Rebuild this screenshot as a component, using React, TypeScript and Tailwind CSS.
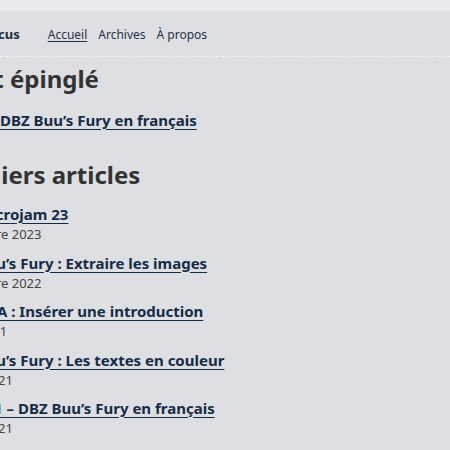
import React from "react";

const posts = [
  { title: "Défi Microjam 23", date: "14 octobre 2023" },
  { title: "DBZ Buu’s Fury : Extraire les images", date: "12 octobre 2022" },
  { title: "SDK GBA : Insérer une introduction", date: "mars 2021" },
  { title: "DBZ Buu’s Fury : Les textes en couleur", date: "1 avril 2021" },
  { title: "Hack #1 – DBZ Buu’s Fury en français", date: "3 avril 2021" },
];

const App: React.FC = () => {
  return (
    <div className="min-h-screen overflow-hidden bg-[#dedfe2] font-['Noto_Sans',sans-serif]">
      <div className="h-[11px] bg-[#e8e9eb]" />
      <header className="flex h-[46px] items-center border-b border-dashed border-[#f3f3f5]">
        <div className="-ml-[57px] mt-[2px] flex items-center">
          <span className="text-[13px] font-bold text-[#1d2c3d]">Retro-Focus</span>
          <nav className="ml-[28px] flex gap-[11px] text-[12px] text-[#1f3149]">
            <a href="#" className="underline underline-offset-2">Accueil</a>
            <a href="#">Archives</a>
            <a href="#">À propos</a>
          </nav>
        </div>
      </header>

      <main className="-ml-[57px] pt-[7px]">
        <h2 className="text-[24px] leading-[30px] font-bold text-[#333]">Sujet épinglé</h2>
        <a
          href="#"
          className="mt-[16px] block text-[15px] leading-[20px] font-bold text-[#142c48] underline underline-offset-[3px]"
        >
          Projet : DBZ Buu’s Fury en français
        </a>

        <h2 className="mt-[30px] text-[24px] leading-[30px] font-bold text-[#333]">Derniers articles</h2>
        <ul className="mt-[14px] flex flex-col gap-[9.5px]">
          {posts.map((p) => (
            <li key={p.title}>
              <a
                href="#"
                className="block text-[15px] leading-[20px] font-bold text-[#142c48] underline underline-offset-[3px]"
              >
                {p.title}
              </a>
              <p className="mt-[1px] text-[13px] leading-[18px] text-[#444]">{p.date}</p>
            </li>
          ))}
        </ul>
      </main>
    </div>
  );
};

export default App;
